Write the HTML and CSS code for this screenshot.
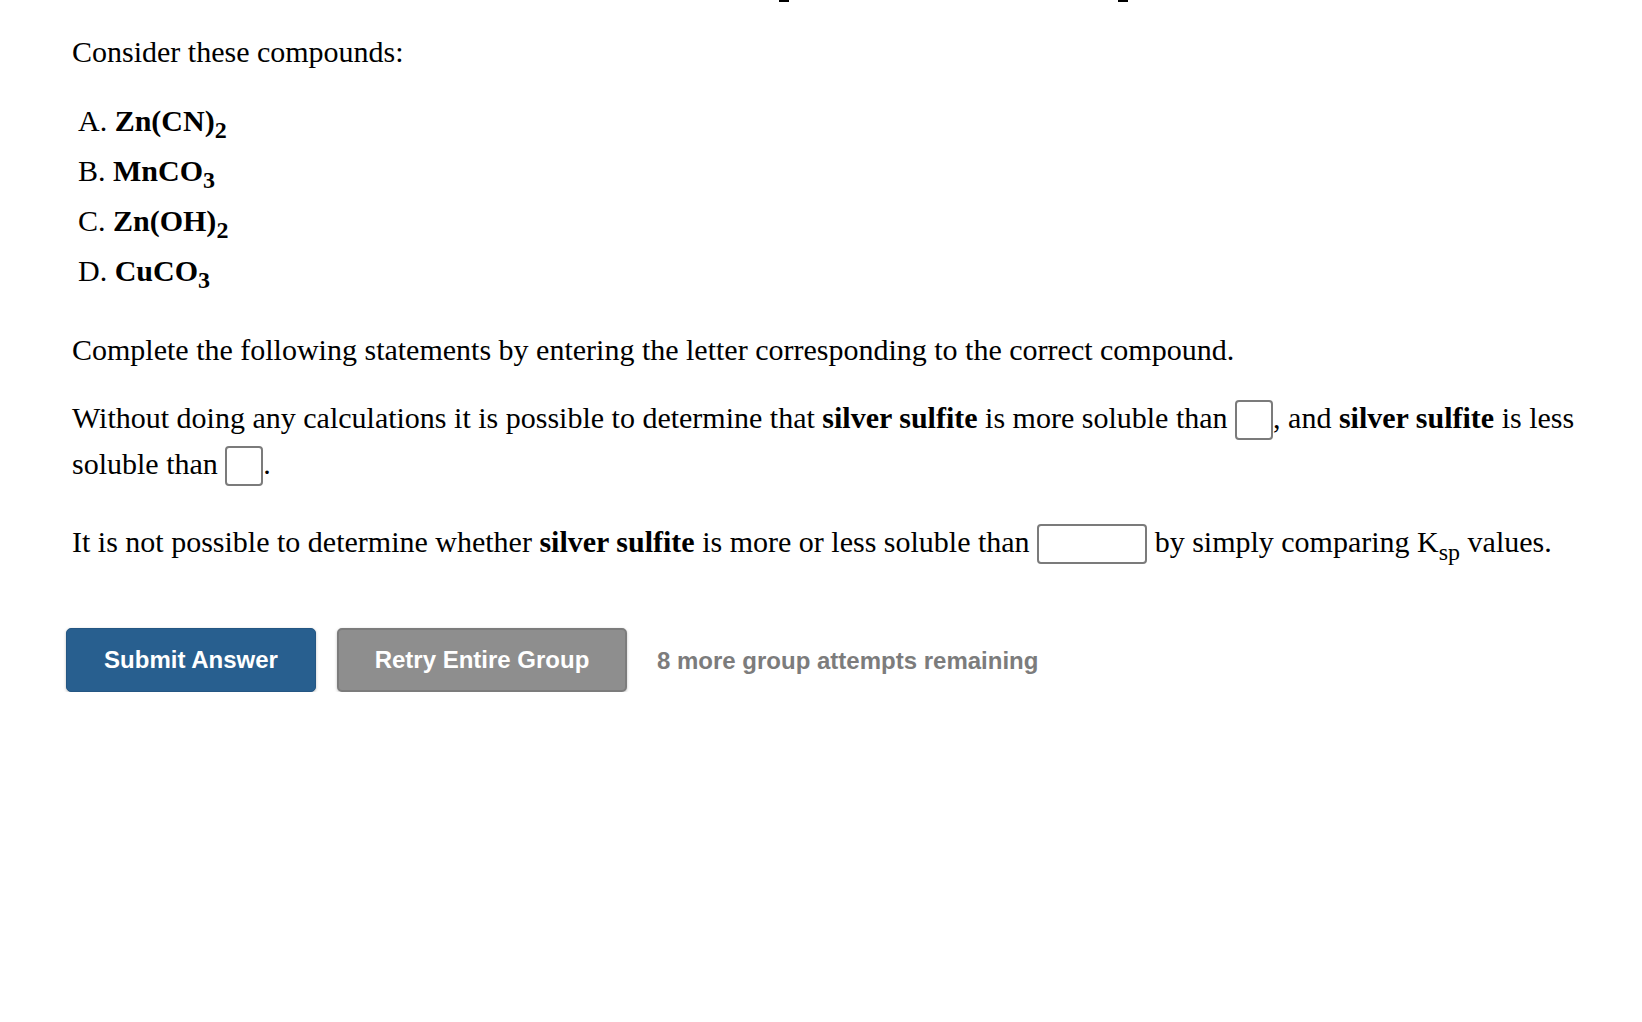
FILE: index.html
```html
<!DOCTYPE html>
<html>
<head>
<meta charset="utf-8">
<link rel="stylesheet" href="styles.css">
</head>
<body>
<div class="cut">
  <span class="foot foot-1"></span>
  <span class="foot foot-2"></span>
</div>
<div class="page">
  <p class="intro">Consider these compounds:</p>
  <ol class="options">
    <li>A. <b>Zn(CN)<sub>2</sub></b></li>
    <li>B. <b>MnCO<sub>3</sub></b></li>
    <li>C. <b>Zn(OH)<sub>2</sub></b></li>
    <li>D. <b>CuCO<sub>3</sub></b></li>
  </ol>
  <p class="lead">Complete the following statements by entering the letter corresponding to the correct compound.</p>
  <p class="stmt">Without doing any calculations it is possible to determine that <b>silver sulfite</b> is more soluble than <span class="box"></span>, and <b>silver sulfite</b> is less soluble than <span class="box"></span>.</p>
  <p class="stmt2">It is not possible to determine whether <b>silver sulfite</b> is more or less soluble than <span class="box wide"></span> by simply comparing K<sub class="ksp">sp</sub> values.</p>
  <div class="actions">
    <button class="btn primary">Submit Answer</button>
    <button class="btn secondary">Retry Entire Group</button>
    <span class="remaining">8 more group attempts remaining</span>
  </div>
</div>
</body>
</html>
```
FILE: styles.css
```css
html, body {
  margin: 0;
  padding: 0;
  background: #ffffff;
}
body {
  font-family: "Liberation Serif", "Times New Roman", serif;
  color: #000000;
}
.cut {
  height: 4px;
  display: flex;
  align-items: flex-start;
}
.foot {
  display: block;
  width: 10px;
  height: 2px;
  background: #000;
}
.foot-1 { margin-left: 779px; }
.foot-2 { margin-left: 329px; }
.page {
  padding: 25px 30px 0 72px;
  font-size: 30px;
  line-height: 45px;
}
p { margin: 0; }
b { font-weight: bold; }
sub {
  font-size: 0.8em;
  line-height: 0;
  vertical-align: -7px;
}
.options {
  list-style: none;
  margin: 22px 0 0 0;
  padding: 0 0 0 6px;
  line-height: 50px;
}
.lead { margin-top: 31px; }
.stmt {
  margin-top: 23px;
  line-height: 46px;
}
.stmt2 { margin-top: 32px; }
.box {
  display: inline-block;
  box-sizing: border-box;
  width: 38px;
  height: 40px;
  border: 2px solid #7b7b7b;
  border-radius: 4px;
  vertical-align: -12px;
  background: #fff;
}
.box.wide { width: 110px; }
.ksp { vertical-align: -8px; }
.actions {
  margin-top: 64px;
  margin-left: -6px;
  display: flex;
  align-items: center;
}
.btn {
  font-family: "Liberation Sans", Arial, sans-serif;
  font-weight: bold;
  font-size: 24px;
  height: 64px;
  border-radius: 5px;
  color: #ffffff;
  cursor: pointer;
  box-shadow: 0 1px 3px rgba(0,0,0,0.25);
}
.primary {
  background: #285f8f;
  border: 1px solid #245683;
  width: 250px;
  padding: 0;
}
.secondary {
  background: #8e8e8e;
  border: 2px solid #7c7c7c;
  width: 290px;
  padding: 0;
  margin-left: 21px;
}
.remaining {
  font-family: "Liberation Sans", Arial, sans-serif;
  font-weight: bold;
  font-size: 24px;
  color: #7c7c7c;
  margin-left: 30px;
}
```
